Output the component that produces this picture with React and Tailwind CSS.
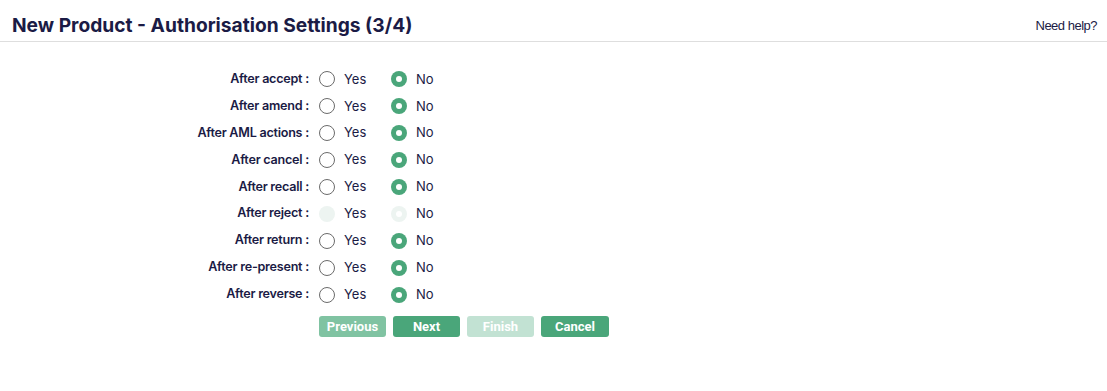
import React from 'react';

const rows = [
    { label: 'After accept', disabled: false },
    { label: 'After amend', disabled: false },
    { label: 'After AML actions', disabled: false },
    { label: 'After cancel', disabled: false },
    { label: 'After recall', disabled: false },
    { label: 'After reject', disabled: true },
    { label: 'After return', disabled: false },
    { label: 'After re-present', disabled: false },
    { label: 'After reverse', disabled: false },
];

function Radio({ checked, disabled }) {
    if (disabled) {
        return (
            <span className="w-4 h-4 rounded-full bg-[#edf4f1] flex items-center justify-center">
                {checked && <span className="w-[6px] h-[6px] rounded-full bg-white" />}
            </span>
        );
    }
    if (checked) {
        return (
            <span className="w-4 h-4 rounded-full bg-[#4aa67a] flex items-center justify-center">
                <span className="w-[6px] h-[6px] rounded-full bg-white" />
            </span>
        );
    }
    return <span className="w-4 h-4 rounded-full border border-[#6b6b6b] bg-white" />;
}

export default function App() {
    return (
        <div className="w-[1107px] h-[391px] bg-white font-['Inter',sans-serif]">
            {/* Header */}
            <div className="h-[42px] pt-[10px] border-b border-[#dedede] flex items-center justify-between pl-3 pr-[10px]">
                <h1 className="text-[19.2px] font-bold text-[#1b1b45]">
                    New Product - Authorisation Settings (3/4)
                </h1>
                <a className="text-[13px] text-[#1b1b45] font-['Liberation_Sans',sans-serif] tracking-[-0.5px]">Need help?</a>
            </div>

            {/* Form rows */}
            <div className="pt-[24px] flex flex-col">
                {rows.map((row) => (
                    <div key={row.label} className="h-[26.9px] flex items-center">
                        <div className="w-[309px] text-right text-[12.6px] tracking-[-0.25px] font-semibold text-[#1b1b45]">
                            {row.label} :
                        </div>
                        <div className="ml-[10px] flex items-center w-[72px]">
                            <Radio checked={false} disabled={row.disabled} />
                            <span className="ml-[9px] text-[13px] text-[#1b1b45]">Yes</span>
                        </div>
                        <div className="flex items-center">
                            <Radio checked={true} disabled={row.disabled} />
                            <span className="ml-[9px] text-[13px] text-[#1b1b45]">No</span>
                        </div>
                    </div>
                ))}

                {/* Buttons */}
                <div className="mt-[8px] ml-[319px] flex gap-[7px] font-['Roboto',sans-serif]">
                    <button className="w-[67px] h-[21px] rounded-[3px] bg-[#80c3a2] text-white text-[13px] font-bold">Previous</button>
                    <button className="w-[67px] h-[21px] rounded-[3px] bg-[#4aa67a] text-white text-[13px] font-bold">Next</button>
                    <button className="w-[67px] h-[21px] rounded-[3px] bg-[#c2e2d3] text-white text-[13px] font-bold">Finish</button>
                    <button className="w-[68px] h-[21px] rounded-[3px] bg-[#4aa67a] text-white text-[13px] font-bold">Cancel</button>
                </div>
            </div>
        </div>
    );
}
